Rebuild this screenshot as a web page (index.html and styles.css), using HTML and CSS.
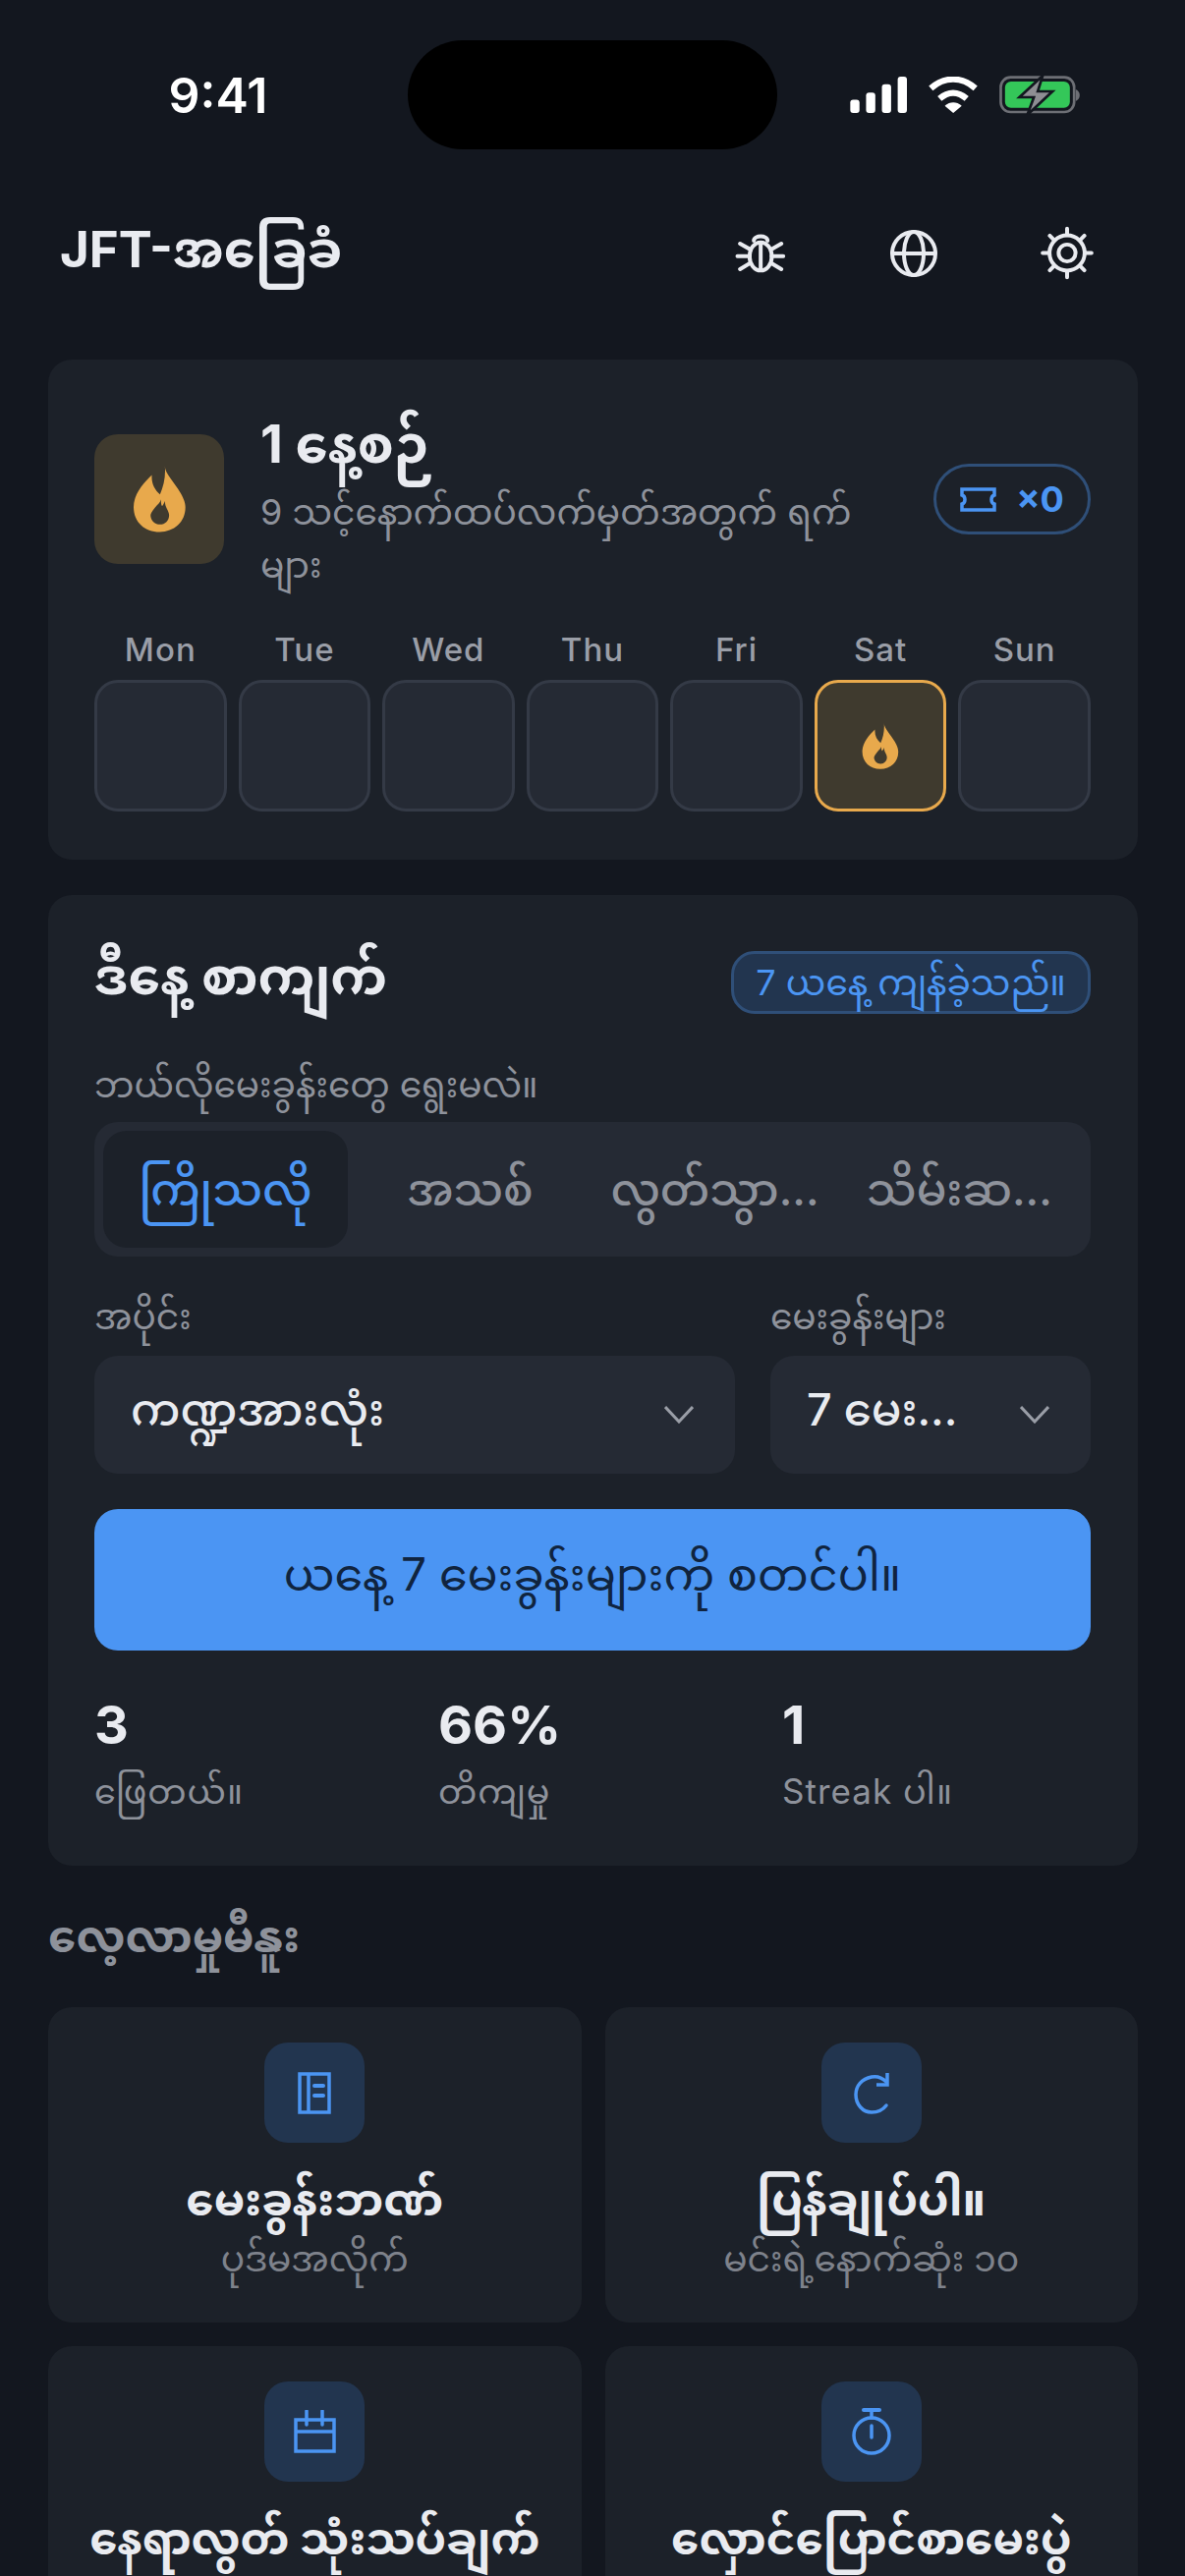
FILE: index.html
```html
<!DOCTYPE html>
<html lang="my">
<head>
    <meta charset="UTF-8">
    <title>JFT-အခြေခံ</title>
    <link rel="stylesheet" href="styles.css">
</head>
<body>
    <svg class="defs" width="0" height="0">
        <symbol id="flame" viewBox="166 162 160 204">
            <path fill="currentColor" fill-rule="evenodd" d="M262 162C262 185 290 210 310 245C322 265 325 280 325 290C325 335 290 365 246 365C200 365 166 335 166 288C166 250 195 215 222 190C220 215 230 235 247 250C258 225 265 195 262 162ZM250 265C248 275 240 280 232 290C222 302 218 310 218 315C220 332 232 342 247 342C263 342 275 330 275 313C275 300 262 290 262 270C258 280 255 285 253 285C250 280 250 272 250 265Z"/>
        </symbol>
        <symbol id="chevron" viewBox="0 0 30 18">
            <path fill="none" stroke="currentColor" stroke-width="3" d="M1 1L15 16L29 1"/>
        </symbol>
    </svg>

    <!-- Status bar -->
    <div class="status">
        <span class="time">9:41</span>
        <div class="island"></div>
        <div class="status-icons">
            <svg width="58" height="37" viewBox="75 57 173 110" fill="#fff">
                <rect x="76" y="127" width="28" height="40" rx="9"/>
                <rect x="124" y="105" width="28" height="62" rx="9"/>
                <rect x="172" y="80" width="28" height="87" rx="9"/>
                <rect x="220" y="57" width="28" height="110" rx="9"/>
            </svg>
            <svg width="50" height="37" viewBox="316 57 151 110">
                <path fill="none" stroke="#fff" stroke-width="19" d="M323 92C365 55 418 55 460 92M350 124C376 101 407 101 433 124"/>
                <path fill="#fff" d="M366 146C382 132 402 132 418 146L392 168Z"/>
            </svg>
            <svg width="82" height="40" viewBox="535 52 245 120">
                <rect x="539" y="57" width="224" height="106" rx="30" fill="none" stroke="#6d6f75" stroke-width="8"/>
                <rect x="552" y="70" width="198" height="80" rx="18" fill="#34c759"/>
                <path d="M768 94C776 98 780 104 780 112C780 120 776 126 768 130Z" fill="#6d6f75"/>
                <path d="M667 52L596 118H640L620 172L697 100H652Z" fill="#8e8e93" stroke="#13171f" stroke-width="8"/>
            </svg>
        </div>
    </div>

    <!-- Header -->
    <header class="top-bar">
        <h1>JFT-အခြေခံ</h1>
        <div class="top-actions">
            <svg class="top-icon" width="48" height="40" viewBox="90 105 145 120" fill="none" stroke="#e9ebf0" stroke-width="12" stroke-linecap="round">
                <path d="M142 126C142 108 184 108 184 126"/>
                <ellipse cx="163" cy="174" rx="34" ry="43"/>
                <path d="M163 138V214M100 135L130 152M92 173H130M100 213L130 195M226 135L196 152M232 173H196M226 213L196 195"/>
            </svg>
            <svg class="top-icon" width="50" height="50" viewBox="555 98 150 150" fill="none" stroke="#e9ebf0" stroke-width="12">
                <circle cx="630" cy="173" r="66"/>
                <ellipse cx="630" cy="173" rx="30" ry="66"/>
                <path d="M564 173H696"/>
            </svg>
            <svg class="top-icon" width="55" height="55" viewBox="1015 90 166 166" fill="none" stroke="#e9ebf0" stroke-width="12" stroke-linecap="round">
                <circle cx="1098" cy="173" r="26"/>
                <circle cx="1098" cy="173" r="54"/>
                <path d="M1098 98V118M1098 228V248M1023 173H1043M1153 173H1173M1045 120L1059 134M1137 212L1151 226M1151 120L1137 134M1059 212L1045 226"/>
            </svg>
        </div>
    </header>

    <main class="content">
        <!-- Streak card -->
        <section class="card streak">
            <div class="streak-head">
                <div class="flame-box"><svg width="53" height="68"><use href="#flame"/></svg></div>
                <div class="streak-text">
                    <div class="streak-title">1 နေ့စဉ်</div>
                    <div class="streak-sub">9 သင့်နောက်ထပ်လက်မှတ်အတွက် ရက်များ</div>
                </div>
                <div class="ticket">
                    <svg width="37" height="25" viewBox="0 0 37 25" fill="none" stroke="#4b95f3" stroke-width="3.5">
                        <path d="M2 2H35V8C31 9 31 16 35 17V23H2V17C6 16 6 9 2 8Z"/>
                    </svg>
                    <span>×0</span>
                </div>
            </div>
            <div class="week">
                <div class="day"><span>Mon</span><div class="day-box"></div></div>
                <div class="day"><span>Tue</span><div class="day-box"></div></div>
                <div class="day"><span>Wed</span><div class="day-box"></div></div>
                <div class="day"><span>Thu</span><div class="day-box"></div></div>
                <div class="day"><span>Fri</span><div class="day-box"></div></div>
                <div class="day"><span>Sat</span><div class="day-box active"><svg width="40" height="47"><use href="#flame"/></svg></div></div>
                <div class="day"><span>Sun</span><div class="day-box"></div></div>
            </div>
        </section>

        <!-- Today's study card -->
        <section class="card study">
            <div class="study-head">
                <h2>ဒီနေ့ စာကျက်</h2>
                <span class="days-left">7 ယနေ့ ကျန်ခဲ့သည်။</span>
            </div>
            <div class="field-label pick-label">ဘယ်လိုမေးခွန်းတွေ ရွေးမလဲ။</div>
            <div class="tabs">
                <div class="tab selected">ကြိုသလို</div>
                <div class="tab">အသစ်</div>
                <div class="tab">လွတ်သွာ...</div>
                <div class="tab">သိမ်းဆ...</div>
            </div>
            <div class="selects">
                <div class="select-col wide">
                    <div class="field-label">အပိုင်း</div>
                    <div class="select"><span>ကဏ္ဍအားလုံး</span><svg width="30" height="18"><use href="#chevron"/></svg></div>
                </div>
                <div class="select-col">
                    <div class="field-label">မေးခွန်းများ</div>
                    <div class="select"><span>7 မေး...</span><svg width="30" height="18"><use href="#chevron"/></svg></div>
                </div>
            </div>
            <button class="start-btn">ယနေ့ 7 မေးခွန်းများကို စတင်ပါ။</button>
            <div class="stats">
                <div><div class="stat-num">3</div><div class="stat-label">ဖြေတယ်။</div></div>
                <div><div class="stat-num">66%</div><div class="stat-label">တိကျမှု</div></div>
                <div><div class="stat-num">1</div><div class="stat-label">Streak ပါ။</div></div>
            </div>
        </section>

        <!-- Study menu -->
        <h3 class="section-title">လေ့လာမှုမီနူး</h3>
        <div class="menu">
            <div class="menu-card">
                <div class="menu-icon">
                    <svg width="34" height="43" viewBox="0 0 34 43" fill="none" stroke="#4b95f3" stroke-width="3.5">
                        <rect x="2" y="2" width="30" height="39"/>
                        <path d="M11 2V41"/>
                        <path d="M17 14H26M17 24H26" stroke-width="4" stroke-linecap="round"/>
                    </svg>
                </div>
                <div class="menu-title">မေးခွန်းဘဏ်</div>
                <div class="menu-sub">ပုဒ်မအလိုက်</div>
            </div>
            <div class="menu-card">
                <div class="menu-icon">
                    <svg width="36" height="43" viewBox="0 0 36 43" fill="none" stroke="#4b95f3" stroke-width="3.5" stroke-linecap="round">
                        <path d="M33 10C28 5 23 4 18 5C8 7 2 14 2 23C2 33 9 41 18 41C25 41 30 38 33 34"/>
                        <path d="M34 1V13H23" stroke-linecap="butt"/>
                    </svg>
                </div>
                <div class="menu-title">ပြန်ချုပ်ပါ။</div>
                <div class="menu-sub">မင်းရဲ့နောက်ဆုံး ၁၀</div>
            </div>
            <div class="menu-card">
                <div class="menu-icon">
                    <svg width="43" height="44" viewBox="0 0 43 44" fill="none" stroke="#4b95f3" stroke-width="3.5">
                        <rect x="2" y="10" width="39" height="32"/>
                        <path d="M2 22H41"/>
                        <path d="M13 1V15M29 1V15" stroke-linecap="round"/>
                    </svg>
                </div>
                <div class="menu-title">နေရာလွတ် သုံးသပ်ချက်</div>
            </div>
            <div class="menu-card">
                <div class="menu-icon">
                    <svg width="40" height="48" viewBox="0 0 40 48" fill="none" stroke="#4b95f3" stroke-width="3.5">
                        <circle cx="20" cy="28" r="18"/>
                        <path d="M12 2H28" stroke-width="4" stroke-linecap="round"/>
                        <path d="M20 3V10M20 18V30" stroke-linecap="round"/>
                    </svg>
                </div>
                <div class="menu-title">လှောင်ပြောင်စာမေးပွဲ</div>
            </div>
        </div>
    </main>
</body>
</html>
```

FILE: styles.css
```css
html, body {
    margin: 0;
    height: 2622px;
    overflow: hidden;
}
body {
    background: #13171f;
    color: #e9ebf0;
    font-family: Inter, "Noto Sans", "Noto Sans Myanmar", "Padauk", sans-serif;
}
.defs {
    position: absolute;
}

/* status bar */
.status {
    display: flex;
    align-items: center;
    height: 111px;
    padding-top: 41px;
}
.time {
    width: 102px;
    margin-left: 171px;
    font-size: 50px;
    font-weight: 600;
    color: #fff;
    text-align: center;
}
.island {
    width: 376px;
    height: 111px;
    margin-left: 142px;
    border-radius: 56px;
    background: #000;
}
.status-icons {
    display: flex;
    align-items: center;
    gap: 22px;
    margin-left: 74px;
}

/* header */
.top-bar {
    display: flex;
    align-items: center;
    justify-content: space-between;
    height: 105px;
    margin-top: 53px;
    padding: 0 90px 0 61px;
}
.top-bar h1 {
    margin: 4px 0 0;
    font-size: 51px;
    font-weight: 700;
}
.top-actions {
    display: flex;
    align-items: center;
}
.top-icon {
    width: 60px;
    margin-left: 96px;
}

.content {
    padding: 56px 48px 0 49px;
}
.card {
    padding: 0 48px 0 47px;
    border-radius: 24px;
    background: #1c2129;
}

/* streak */
.streak {
    height: 509px;
    box-sizing: border-box;
    padding-top: 52px;
}
.streak-head {
    display: flex;
    align-items: flex-start;
    height: 225px;
}
.flame-box {
    display: flex;
    align-items: center;
    justify-content: center;
    flex: none;
    width: 132px;
    height: 132px;
    margin-top: 24px;
    border-radius: 24px;
    background: #3f3a2e;
    color: #e8a94c;
}
.streak-text {
    flex: 1;
    margin: 0 44px 0 37px;
}
.streak-title {
    height: 76px;
    font-size: 53px;
    line-height: 68px;
    font-weight: 700;
}
.streak-sub {
    font-size: 36px;
    line-height: 54px;
    color: #8e929b;
}
.ticket {
    display: flex;
    align-items: center;
    justify-content: center;
    gap: 20px;
    flex: none;
    box-sizing: border-box;
    width: 160px;
    height: 72px;
    margin-top: 54px;
    border: 3px solid #2f4f78;
    border-radius: 36px;
    color: #4b95f3;
    font-size: 36px;
    font-weight: 700;
}
.week {
    display: grid;
    grid-template-columns: repeat(7, 1fr);
    gap: 12px;
}
.day span {
    display: block;
    height: 49px;
    font-size: 33px;
    line-height: 36px;
    letter-spacing: 1px;
    font-weight: 500;
    color: #9a9ea7;
    text-align: center;
}
.day-box {
    display: flex;
    align-items: center;
    justify-content: center;
    box-sizing: border-box;
    height: 134px;
    border: 3px solid #343a46;
    border-radius: 24px;
    background: #252a34;
}
.day-box.active {
    border-color: #e8a94c;
    background: #3f3a2e;
    color: #e8a94c;
}

/* today's study */
.study {
    height: 988px;
    box-sizing: border-box;
    margin-top: 36px;
    padding-top: 57px;
}
.study-head {
    display: flex;
    align-items: center;
    justify-content: space-between;
    height: 64px;
}
.study-head h2 {
    margin: 0;
    font-size: 52px;
    font-weight: 700;
}
.days-left {
    box-sizing: border-box;
    height: 64px;
    padding: 0 22px;
    border: 3px solid #2f4f78;
    border-radius: 24px;
    background: #22354f;
    color: #4b95f3;
    font-size: 36px;
    line-height: 58px;
}
.field-label {
    height: 44px;
    font-size: 36px;
    line-height: 44px;
    color: #8e929b;
}
.pick-label {
    margin: 50px 0 16px;
}
.tabs {
    display: grid;
    grid-template-columns: repeat(4, 1fr);
    box-sizing: border-box;
    height: 137px;
    padding: 9px;
    border-radius: 24px;
    background: #252a34;
}
.tab {
    border-radius: 24px;
    color: #8e929b;
    font-size: 45px;
    font-weight: 500;
    line-height: 119px;
    text-align: center;
    white-space: nowrap;
}
.tab.selected {
    background: #1c2129;
    color: #4b95f3;
}
.selects {
    display: flex;
    gap: 36px;
    margin-top: 39px;
}
.select-col {
    flex: 1;
    min-width: 0;
}
.select-col.wide {
    flex: 2;
}
.select {
    display: flex;
    align-items: center;
    justify-content: space-between;
    box-sizing: border-box;
    height: 120px;
    margin-top: 18px;
    padding: 0 42px 0 37px;
    border-radius: 24px;
    background: #252a34;
    font-size: 45px;
    font-weight: 500;
    color: #9a9ea7;
}
.select span {
    color: #e9ebf0;
    white-space: nowrap;
}
.select svg {
    flex: none;
}
.start-btn {
    display: block;
    width: 100%;
    height: 144px;
    margin-top: 36px;
    border: none;
    border-radius: 24px;
    background: #4b95f3;
    color: #10243f;
    font-family: inherit;
    font-size: 46px;
}
.stats {
    display: grid;
    grid-template-columns: repeat(3, 1fr);
    gap: 36px;
    margin-top: 46px;
}
.stat-num {
    height: 60px;
    font-size: 54px;
    line-height: 60px;
    font-weight: 700;
}
.stat-label {
    margin-top: 15px;
    font-size: 35px;
    line-height: 44px;
    letter-spacing: 1px;
    color: #8e929b;
}

/* study menu */
.section-title {
    height: 60px;
    margin: 42px 0 42px;
    font-size: 45px;
    line-height: 60px;
    font-weight: 700;
    color: #8e929b;
}
.menu {
    display: grid;
    grid-template-columns: 1fr 1fr;
    gap: 24px;
}
.menu-card {
    box-sizing: border-box;
    height: 321px;
    padding-top: 36px;
    border-radius: 24px;
    background: #1c2129;
    text-align: center;
}
.menu-icon {
    display: flex;
    align-items: center;
    justify-content: center;
    width: 102px;
    height: 102px;
    margin: 0 auto;
    border-radius: 24px;
    background: #22354f;
}
.menu-title {
    height: 72px;
    margin-top: 22px;
    font-size: 45px;
    line-height: 72px;
    font-weight: 700;
}
.menu-sub {
    font-size: 36px;
    line-height: 48px;
    color: #7e828b;
}
```
